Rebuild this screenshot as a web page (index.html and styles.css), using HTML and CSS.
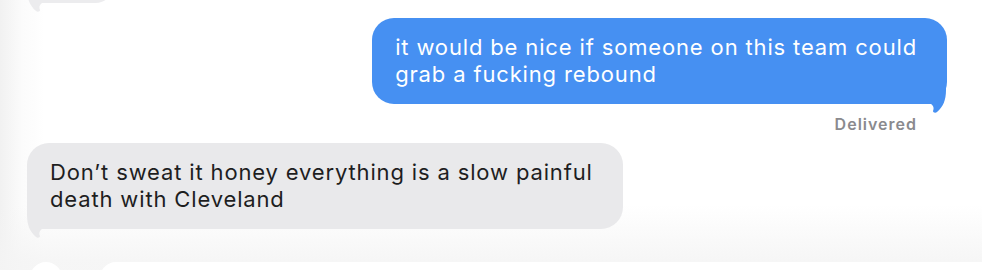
FILE: index.html
```html
<!doctype html>
<html lang="en">
<head>
  <meta charset="UTF-8">
  <title>Messages</title>
  <link rel="stylesheet" href="styles.css">
</head>
<body>
  <div class="thread">
    <div class="row received">
      <div class="bubble gray prev">
        <svg class="tail" viewBox="0 0 38 44" aria-hidden="true"><path d="M2 0V20C2 30 5 37 11 42C12 43 15 43 15 41C14 39 14 36 17 34H38V0Z"/></svg>
      </div>
    </div>

    <div class="row sent">
      <div class="bubble blue">
        <span class="msg-text">it would be nice if someone on this team could<br>grab a fucking rebound</span>
        <svg class="tail" viewBox="0 0 38 44" aria-hidden="true"><path d="M36 0V20C36 30 33 37 27 42C26 43 23 43 23 41C24 39 24 36 21 34H0V0Z"/></svg>
      </div>
    </div>
    <div class="status">Delivered</div>

    <div class="row received">
      <div class="bubble gray">
        <span class="msg-text">Don’t sweat it honey everything is a slow painful<br>death with Cleveland</span>
        <svg class="tail" viewBox="0 0 38 44" aria-hidden="true"><path d="M2 0V20C2 30 5 37 11 42C12 43 15 43 15 41C14 39 14 36 17 34H38V0Z"/></svg>
      </div>
    </div>

    <div class="compose">
      <span class="compose-btn"></span>
      <span class="compose-field"></span>
    </div>
  </div>
</body>
</html>
```

FILE: styles.css
```css
body {
  margin: 0;
  background: linear-gradient(to right, #f1f1f1 0, #fbfbfb 22px, #fff 44px);
  font-family: "Inter", "Liberation Sans", sans-serif;
  overflow: hidden;
}

.thread {
  display: flex;
  flex-direction: column;
  height: 270px;
  overflow: hidden;
  background: linear-gradient(to bottom, rgba(255,255,255,0) 205px, rgba(244,244,244,0.85) 262px);
}

.row {
  display: flex;
}

.row.sent {
  justify-content: flex-end;
  padding-right: 35px;
  margin-top: 15px;
}

.row.received {
  padding-left: 27px;
}

.bubble {
  position: relative;
  box-sizing: border-box;
  padding: 16px 30px 16px 23px;
  border-radius: 22px;
  font-size: 22px;
  line-height: 27px;
  letter-spacing: 0.85px;
}

.msg-text {
  position: relative;
  z-index: 1; /* 文字壓在尾巴上面 */
}

.bubble.blue {
  background: #4690f2;
  color: #fff;
}

.bubble.gray {
  background: #e9e9eb;
  color: #1e1e1f;
}

.bubble.prev {
  width: 88px;
  height: 40px;
  margin-top: -37px;
  background: #ececee;
}

/* 泡泡尾巴，蓋在角落上 */
.tail {
  position: absolute;
  bottom: -10px;
  width: 38px;
  height: 44px;
}

.blue .tail {
  right: -1px;
  fill: #4690f2;
}

.gray .tail {
  left: -2px;
  fill: #e9e9eb;
}

.prev .tail {
  fill: #ececee;
}

.status {
  align-self: flex-end;
  margin: 10px 65px 0 0;
  font-size: 16px;
  line-height: 20px;
  font-weight: 600;
  letter-spacing: 1px;
  color: #8a8a8e;
}

.status + .row {
  margin-top: 9px;
}

.compose {
  display: flex;
  align-items: flex-start;
  gap: 38px;
  margin-top: auto;
  height: 8px;
  flex-shrink: 0;
  padding-left: 30px;
}

.compose-btn {
  width: 32px;
  height: 32px;
  border-radius: 50%;
  background: #fff;
}

.compose-field {
  flex: 1;
  height: 32px;
  border-radius: 16px 0 0 16px;
  background: #fff;
}
```
